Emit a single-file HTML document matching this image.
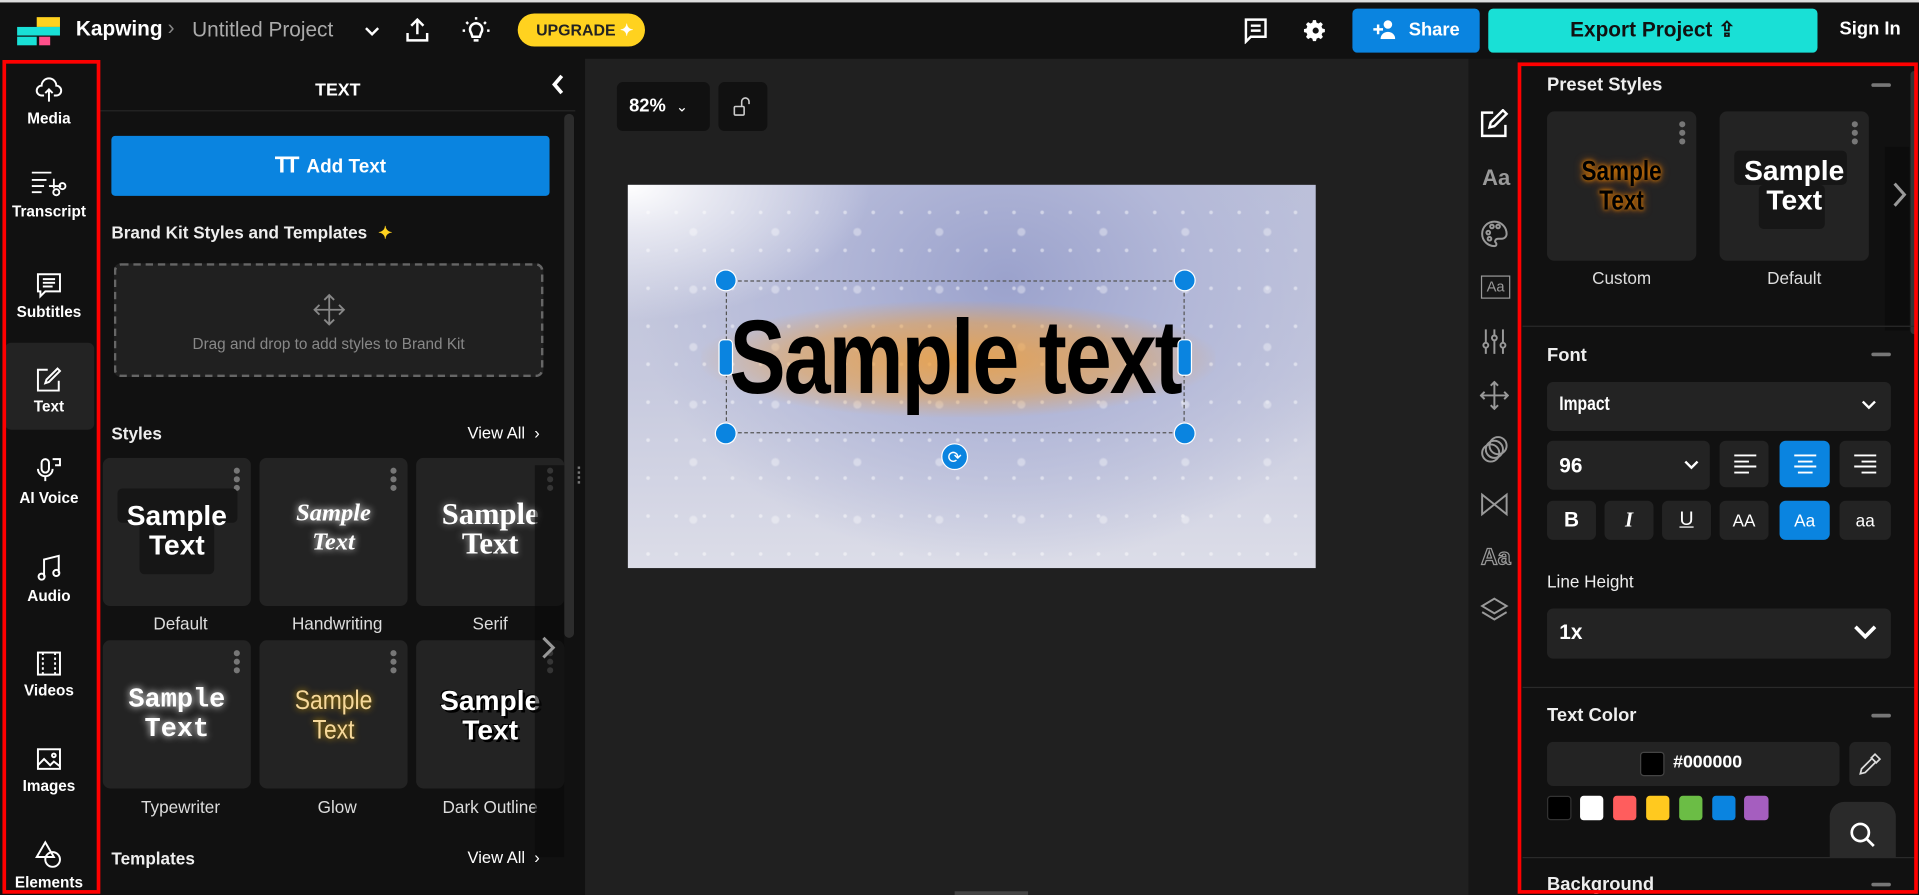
<!DOCTYPE html>
<html><head><meta charset="utf-8">
<style>
*{box-sizing:border-box;margin:0;padding:0}
html,body{width:1919px;height:895px;overflow:hidden;background:#111;font-family:"Liberation Sans",sans-serif;color:#fff}
#s{position:absolute;left:0;top:0;width:1568px;height:731px;transform:scale(1.2239,1.2243);transform-origin:0 0;background:#111;overflow:hidden}
.a{position:absolute}
.nav{position:absolute;left:0;width:80px;text-align:center;font-size:12.5px;font-weight:bold}
.nav svg{display:block;margin:0 auto 4px}
.card{position:absolute;width:121px;height:121px;background:#232323;border-radius:6px}
.dots{position:absolute;right:9px;top:8px;width:5px}
.dots i{display:block;width:5px;height:5px;border-radius:50%;background:#777;margin-bottom:2px}
.lbl{position:absolute;width:121px;text-align:center;font-size:14px;color:#ddd}
.st{position:absolute;left:0;width:121px;text-align:center;line-height:24px;font-size:23px;font-weight:bold;color:#fff}
.btn{position:absolute;background:#232323;border-radius:5px}
.ri{position:absolute;left:1209px;width:24px;height:24px}
.h{font-weight:bold;font-size:15px;color:#eee}
.minus{position:absolute;width:16px;height:3px;background:#777;border-radius:2px}
</style></head><body>
<div id="s">
<div class="a" style="left:0;top:0;width:1568px;height:2px;background:#ddd"></div>
<!-- top bar -->
<div class="a" style="top:14px;height:8px;background:#ffd21f;left:30px;width:19px"></div>
<div class="a" style="left:14px;top:22px;width:35px;height:7px;background:#19e0d6"></div>
<div class="a" style="left:14px;top:30px;width:16px;height:7px;background:#19e0d6"></div>
<div class="a" style="left:32px;top:30px;width:9px;height:7px;background:#ff4f8b"></div>
<div class="a" style="left:62px;top:14px;font-size:17px;font-weight:bold">Kapwing</div>
<div class="a" style="left:137px;top:13px;font-size:17px;color:#888">›</div>
<div class="a" style="left:157px;top:15px;font-size:17px;color:#aaa">Untitled Project</div>
<svg class="a" style="left:297px;top:18px" width="14" height="14" viewBox="0 0 14 14"><path d="M2 5l5 5 5-5" stroke="#fff" stroke-width="2" fill="none"/></svg>
<svg class="a" style="left:330px;top:13px" width="22" height="22" viewBox="0 0 22 22" fill="none" stroke="#fff" stroke-width="2"><path d="M11 15V3M6 8l5-5 5 5M3 14v6h16v-6"/></svg>
<svg class="a" style="left:377px;top:13px" width="24" height="24" viewBox="0 0 24 24" fill="none" stroke="#fff" stroke-width="2"><path d="M8 14a5 5 0 1 1 8 0l-1 3h-6z M10 20h4M12 1v2M4 5l1.5 1.5M20 5l-1.5 1.5M1 12h2M21 12h2"/></svg>
<div class="a" style="left:423px;top:11px;width:104px;height:27px;background:#ffd21f;border-radius:14px;color:#222;font-size:13px;font-weight:bold;line-height:27px;padding-left:15px">UPGRADE <span style="color:#fff">✦</span></div>
<svg class="a" style="left:1016px;top:14px" width="20" height="22" viewBox="0 0 20 22" fill="none" stroke="#fff" stroke-width="2"><path d="M2 2h16v14H6l-4 4z"/><path d="M6 7h8M6 11h8" /></svg>
<svg class="a" style="left:1065px;top:15px" width="20" height="20" viewBox="0 0 24 24"><path fill="#fff" d="M12 8a4 4 0 1 0 0 8 4 4 0 0 0 0-8zm9 5.5v-3l-2.5-.6-.8-1.9 1.3-2.2-2.1-2.1-2.2 1.3-1.9-.8L12.3 1.7h-3l-.6 2.5-1.9.8L4.6 3.7 2.5 5.8l1.3 2.2-.8 1.9L.5 10.5v3l2.5.6.8 1.9-1.3 2.2 2.1 2.1 2.2-1.3 1.9.8.6 2.5h3l.6-2.5 1.9-.8 2.2 1.3 2.1-2.1-1.3-2.2.8-1.9z"/><circle cx="12" cy="12" r="3" fill="#111"/></svg>
<div class="a" style="left:1105px;top:7px;width:104px;height:36px;background:#0a84e0;border-radius:4px;font-size:15px;font-weight:bold;line-height:36px;padding-left:46px">Share</div>
<svg class="a" style="left:1122px;top:16px" width="18" height="16" viewBox="0 0 18 16" fill="#fff"><path d="M0 7h3V4h2v3h3v2H5v3H3V9H0z"/><circle cx="12" cy="4" r="3.5"/><path d="M6 16c0-4 3-6 6-6s6 2 6 6z"/></svg>
<div class="a" style="left:1216px;top:7px;width:269px;height:36px;background:#19e0d6;border-radius:4px;color:#111;font-size:17px;font-weight:bold;line-height:36px;text-align:center">Export Project ⇪</div>
<div class="a" style="left:1503px;top:15px;font-size:15px;font-weight:bold">Sign In</div>

<!-- left nav -->
<div class="a" style="left:2px;top:49px;width:80px;height:681px;border:3px solid #f00;z-index:5"></div>
<div class="a" style="left:4px;top:280px;width:73px;height:71px;background:#232323;border-radius:5px"></div>
<div class="nav" style="top:62px"><svg width="22" height="24" viewBox="0 0 22 24" fill="none" stroke="#fff" stroke-width="1.6"><path d="M7 16H5a4 4 0 0 1 0-8 6 6 0 0 1 12 0 4 4 0 0 1 0 8h-2M11 21V11M8 14l3-3 3 3"/></svg>Media</div>
<div class="nav" style="top:138px"><svg width="32" height="24" viewBox="0 0 32 24" fill="none" stroke="#fff" stroke-width="1.5"><path d="M2 3h16M2 9h12M2 14h10M2 19h8M20 8v8M16 14h10"/><circle cx="27" cy="14" r="2.5"/><circle cx="22" cy="19" r="2.5"/></svg>Transcript</div>
<div class="nav" style="top:222px"><svg width="22" height="22" viewBox="0 0 22 22" fill="none" stroke="#fff" stroke-width="1.6"><path d="M2 2h18v14H8l-4 4v-4H2z M6 6h10M6 9h10M6 12h8"/></svg>Subtitles</div>
<div class="nav" style="top:299px"><svg width="22" height="22" viewBox="0 0 22 22" fill="none" stroke="#fff" stroke-width="1.6"><path d="M10 3H2v17h17v-8M18 2l2 2-9 9-3 1 1-3z"/></svg>Text</div>
<div class="nav" style="top:372px"><svg width="22" height="24" viewBox="0 0 22 24" fill="none" stroke="#fff" stroke-width="1.6"><rect x="5" y="3" width="6" height="11" rx="3"/><path d="M2 11a6 6 0 0 0 12 0M8 17v4M14 3h6v5h-4"/></svg>AI Voice</div>
<div class="nav" style="top:452px"><svg width="22" height="24" viewBox="0 0 22 24" fill="none" stroke="#fff" stroke-width="1.6"><path d="M7 19V5l12-3v14"/><circle cx="5" cy="19" r="2.5"/><circle cx="17" cy="16" r="2.5"/></svg>Audio</div>
<div class="nav" style="top:531px"><svg width="22" height="22" viewBox="0 0 22 22" fill="none" stroke="#fff" stroke-width="1.6"><rect x="2" y="2" width="18" height="18"/><path d="M6 2v18M16 2v18" stroke-dasharray="2 2"/></svg>Videos</div>
<div class="nav" style="top:609px"><svg width="22" height="22" viewBox="0 0 22 22" fill="none" stroke="#fff" stroke-width="1.6"><rect x="2" y="3" width="18" height="16"/><path d="M2 16l5-5 5 5 3-3 5 4"/><circle cx="15" cy="8" r="1.5"/></svg>Images</div>
<div class="nav" style="top:686px"><svg width="24" height="24" viewBox="0 0 24 24" fill="none" stroke="#fff" stroke-width="1.6"><path d="M9 2L2 14h14z"/><circle cx="15" cy="16" r="6"/></svg>Elements</div>

<!-- text panel -->
<div class="a" style="left:82px;top:48px;width:396px;height:683px;background:#111"></div>
<div class="a" style="left:82px;top:66px;width:388px;text-align:center;font-size:14.5px;font-weight:bold">TEXT</div>
<svg class="a" style="left:449px;top:60px" width="14" height="18" viewBox="0 0 14 18"><path d="M10 2L4 9l6 7" stroke="#fff" stroke-width="3" fill="none"/></svg>
<div class="a" style="left:82px;top:90px;width:388px;height:1px;background:#262626"></div>
<div class="a" style="left:461px;top:93px;width:8px;height:428px;background:#2c2c2c;border-radius:4px"></div>
<div class="a" style="left:91px;top:111px;width:358px;height:49px;background:#0a84e0;border-radius:3px;text-align:center;line-height:49px;font-size:15.5px;font-weight:bold"><span style="font-size:19px;letter-spacing:-3px">TT</span>&nbsp;&nbsp;Add Text</div>
<div class="a h" style="left:91px;top:182px;font-size:14px">Brand Kit Styles and Templates <span style="color:#ffd21f;margin-left:5px">✦</span></div>
<div class="a" style="left:93px;top:215px;width:351px;height:93px;border:2px dashed #666;border-radius:6px;background:#202020;text-align:center;color:#888;font-size:12.5px;padding-top:22px">
<svg width="28" height="28" viewBox="0 0 28 28" fill="none" stroke="#888" stroke-width="1.5"><path d="M14 2v24M2 14h24M10 6l4-4 4 4M10 22l4 4 4-4M6 10l-4 4 4 4M22 10l4 4-4 4"/></svg>
<div style="margin-top:4px">Drag and drop to add styles to Brand Kit</div></div>
<div class="a h" style="left:91px;top:346px;font-size:14px">Styles</div>
<div class="a" style="left:382px;top:346px;font-size:13.5px">View All &nbsp;›</div>

<div class="card" style="left:84px;top:374px"><div class="dots"><i></i><i></i><i></i></div>
<div class="a" style="left:12px;top:25px;width:98px;height:28px;background:#161616;border-radius:4px"></div><div class="a" style="left:30px;top:53px;width:61px;height:42px;background:#161616;border-radius:4px"></div>
<div class="st" style="top:35px">Sample<br>Text</div></div>
<div class="card" style="left:212px;top:374px"><div class="dots"><i></i><i></i><i></i></div><div class="st" style="top:33px;font-family:'Liberation Serif',serif;font-style:italic;font-size:20px;text-shadow:0 0 6px #fff">Sample<br>Text</div></div>
<div class="card" style="left:340px;top:374px;width:121px"><div class="dots"><i></i><i></i><i></i></div><div class="st" style="top:35px;font-family:'Liberation Serif',serif;font-size:25px;text-shadow:0 0 6px #aaa">Sample<br>Text</div></div>
<div class="lbl" style="left:87px;top:501px">Default</div><div class="lbl" style="left:215px;top:501px">Handwriting</div><div class="lbl" style="left:340px;top:501px">Serif</div>
<div class="card" style="left:84px;top:523px"><div class="dots"><i></i><i></i><i></i></div><div class="st" style="top:37px;font-family:'Liberation Mono',monospace;font-size:22px;text-shadow:0 0 6px #fff">Sample<br>Text</div></div>
<div class="card" style="left:212px;top:523px"><div class="dots"><i></i><i></i><i></i></div><div class="st" style="top:37px;font-weight:normal;color:#f6d89a;font-size:22px;transform:scaleX(.85);text-shadow:0 0 6px #c90">Sample<br>Text</div></div>
<div class="card" style="left:340px;top:523px"><div class="dots"><i></i><i></i><i></i></div><div class="st" style="top:37px;text-shadow:2px 2px 0 #000,-1px -1px 0 #000">Sample<br>Text</div></div>
<div class="lbl" style="left:87px;top:651px">Typewriter</div><div class="lbl" style="left:215px;top:651px">Glow</div><div class="lbl" style="left:340px;top:651px">Dark Outline</div>
<div class="a" style="left:437px;top:380px;width:24px;height:320px;background:rgba(10,10,10,.6)"></div>
<svg class="a" style="left:441px;top:519px" width="14" height="20" viewBox="0 0 14 20"><path d="M3 2l8 8-8 8" stroke="#999" stroke-width="2.5" fill="none"/></svg>
<div class="a h" style="left:91px;top:693px;font-size:14px">Templates</div>
<div class="a" style="left:382px;top:693px;font-size:13.5px">View All &nbsp;›</div>

<!-- center -->
<div class="a" style="left:478px;top:48px;width:722px;height:683px;background:#202020"></div>
<div class="a" style="left:472px;top:381px;width:3px;height:14px;border-left:2px dotted #777"></div>
<div class="a" style="left:504px;top:67px;width:76px;height:40px;background:#111;border-radius:5px;font-size:15px;font-weight:bold;line-height:40px;padding-left:10px">82% <span style="font-weight:normal;font-size:12px;margin-left:4px">⌄</span></div>
<div class="a" style="left:587px;top:67px;width:40px;height:40px;background:#111;border-radius:5px"></div>
<svg class="a" style="left:598px;top:78px" width="18" height="18" viewBox="0 0 18 18" fill="none" stroke="#ccc" stroke-width="1.3"><rect x="2" y="9" width="8" height="7" rx="1"/><path d="M8 9V5a3 3 0 0 1 6 0v2"/></svg>
<div class="a" style="left:513px;top:151px;width:562px;height:313px;overflow:hidden;background:radial-gradient(ellipse at 0% 0%,#fff 0,#e8e9f2 8%,rgba(0,0,0,0) 25%),radial-gradient(ellipse at 55% 25%,#9ba2cc 0,#b3b8d8 35%,rgba(0,0,0,0) 70%),linear-gradient(180deg,#bfc3da 0%,#c6c9de 50%,#dcdde8 100%)">
<div class="a" style="left:0;top:0;width:562px;height:313px;opacity:.6;background-image:radial-gradient(circle,rgba(255,255,255,.8) 1px,transparent 2px),radial-gradient(circle,rgba(255,255,255,.6) 2.5px,transparent 4px);background-size:23px 31px,67px 47px;background-position:5px 7px,20px 15px"></div>
<div class="a" style="left:60px;top:95px;width:420px;height:95px;background:radial-gradient(ellipse,rgba(240,160,60,.85) 0,rgba(240,160,60,.5) 45%,rgba(240,160,60,0) 72%)"></div>
<div class="a" style="left:-33px;top:96px;width:600px;text-align:center;white-space:nowrap"><span style="display:inline-block;font-weight:bold;font-size:86px;line-height:90px;color:#000;transform:scaleX(.8);letter-spacing:-2px">Sample text</span></div>
<div class="a" style="left:80px;top:78px;width:375px;height:125px;border:1px dashed #555"></div>
<div class="a" style="left:71px;top:69px;width:18px;height:18px;border-radius:50%;background:#0a84e0;border:1px solid #fff"></div>
<div class="a" style="left:446px;top:69px;width:18px;height:18px;border-radius:50%;background:#0a84e0;border:1px solid #fff"></div>
<div class="a" style="left:71px;top:194px;width:18px;height:18px;border-radius:50%;background:#0a84e0;border:1px solid #fff"></div>
<div class="a" style="left:446px;top:194px;width:18px;height:18px;border-radius:50%;background:#0a84e0;border:1px solid #fff"></div>
<div class="a" style="left:74px;top:126px;width:12px;height:30px;border-radius:4px;background:#0a84e0;border:1px solid #fff"></div>
<div class="a" style="left:449px;top:126px;width:12px;height:30px;border-radius:4px;background:#0a84e0;border:1px solid #fff"></div>
<div class="a" style="left:256px;top:211px;width:22px;height:22px;border-radius:50%;background:#0a84e0;border:1px solid #fff;color:#fff;font-size:14px;text-align:center;line-height:20px">⟳</div>
</div>

<!-- right icon column -->
<div class="a" style="left:1200px;top:48px;width:40px;height:683px;background:#161616"></div>
<svg class="ri" style="top:89px" viewBox="0 0 24 24" fill="none" stroke="#fff" stroke-width="2"><path d="M11 3H2v19h19v-9M19 1l3 3-10 10-4 1 1-4z"/></svg>
<div class="a" style="left:1211px;top:135px;font-size:18px;font-weight:bold;color:#999">Aa</div>
<svg class="ri" style="top:179px" viewBox="0 0 24 24" fill="none" stroke="#999" stroke-width="1.6"><path d="M12 2a10 10 0 0 0 0 20c2 0 2-2 1-3s0-3 2-3h3a4 4 0 0 0 4-4c0-5-4-10-10-10z"/><circle cx="7" cy="11" r="1.5"/><circle cx="10" cy="6" r="1.5"/><circle cx="15" cy="6" r="1.5"/><circle cx="8" cy="16" r="1.5"/></svg>
<div class="a" style="left:1210px;top:225px;width:24px;height:19px;border:1.5px solid #999;font-size:12px;color:#999;text-align:center;line-height:16px">Aa</div>
<svg class="ri" style="top:267px" viewBox="0 0 24 24" fill="none" stroke="#999" stroke-width="1.6"><path d="M5 2v20M12 2v20M19 2v20"/><circle cx="5" cy="15" r="2" fill="#161616"/><circle cx="12" cy="9" r="2" fill="#161616"/><circle cx="19" cy="15" r="2" fill="#161616"/></svg>
<svg class="ri" style="top:311px" viewBox="0 0 24 24" fill="none" stroke="#999" stroke-width="1.6"><path d="M12 1v22M1 12h22M9 4l3-3 3 3M9 20l3 3 3-3M4 9l-3 3 3 3M20 9l3 3-3 3"/></svg>
<svg class="ri" style="top:355px" viewBox="0 0 24 24" fill="none" stroke="#999" stroke-width="1.6"><circle cx="9" cy="15" r="7"/><circle cx="12" cy="12" r="7"/><circle cx="15" cy="9" r="7"/></svg>
<svg class="ri" style="top:400px" viewBox="0 0 24 24" fill="none" stroke="#999" stroke-width="1.6"><path d="M2 4v16l20-16v16z"/></svg>
<div class="a" style="left:1210px;top:445px;font-size:19px;color:#161616;-webkit-text-stroke:1px #999;font-weight:bold">Aa</div>
<svg class="ri" style="top:486px" viewBox="0 0 24 24" fill="none" stroke="#999" stroke-width="1.6"><path d="M12 3l10 6-10 6-10-6z M2 14l10 6 10-6"/></svg>

<!-- right panel -->
<div class="a" style="left:1240px;top:48px;width:328px;height:683px;background:#111"></div>
<div class="a" style="left:1240px;top:51px;width:327px;height:679px;border:3px solid #f00;z-index:5"></div>
<div class="a" style="left:1561px;top:58px;width:6px;height:215px;background:#333;border-radius:3px"></div>
<div class="a h" style="left:1264px;top:61px">Preset Styles</div><div class="minus" style="left:1529px;top:68px"></div>
<div class="card" style="left:1264px;top:91px;width:122px;height:122px"><div class="dots"><i></i><i></i><i></i></div><div class="st" style="width:122px;top:36px;color:#000;text-shadow:0 0 4px #e80,0 0 8px #c60"><span style="display:inline-block;transform:scaleX(.8)">Sample<br>Text</span></div></div>
<div class="card" style="left:1405px;top:91px;width:122px;height:122px"><div class="dots"><i></i><i></i><i></i></div><div class="a" style="left:12px;top:32px;width:92px;height:28px;background:#161616;border-radius:4px"></div><div class="a" style="left:32px;top:60px;width:54px;height:36px;background:#161616;border-radius:4px"></div><div class="st" style="width:122px;top:36px">Sample<br>Text</div></div>
<div class="a" style="left:1540px;top:120px;width:20px;height:150px;background:#0c0c0c"></div>
<svg class="a" style="left:1545px;top:148px" width="14" height="22" viewBox="0 0 14 22"><path d="M3 2l8 9-8 9" stroke="#999" stroke-width="2.5" fill="none"/></svg>
<div class="lbl" style="left:1264px;top:219px;width:122px">Custom</div><div class="lbl" style="left:1405px;top:219px;width:122px">Default</div>
<div class="a" style="left:1244px;top:266px;width:320px;height:1px;background:#2a2a2a"></div>
<div class="a h" style="left:1264px;top:282px">Font</div><div class="minus" style="left:1529px;top:288px"></div>
<div class="btn" style="left:1264px;top:312px;width:281px;height:40px"></div>
<div class="a" style="left:1274px;top:322px;font-weight:bold;font-size:16px;transform:scaleX(.8);transform-origin:0 0">Impact</div>
<svg class="a" style="left:1520px;top:325px" width="14" height="12" viewBox="0 0 14 12"><path d="M2 3l5 5 5-5" stroke="#fff" stroke-width="2" fill="none"/></svg>
<div class="btn" style="left:1264px;top:360px;width:133px;height:40px"></div>
<div class="a" style="left:1274px;top:371px;font-size:17px;font-weight:bold">96</div>
<svg class="a" style="left:1375px;top:374px" width="14" height="12" viewBox="0 0 14 12"><path d="M2 3l5 5 5-5" stroke="#fff" stroke-width="2" fill="none"/></svg>
<div class="btn" style="left:1405px;top:360px;width:40px;height:38px"></div>
<div class="btn" style="left:1454px;top:360px;width:41px;height:38px;background:#0a84e0"></div>
<div class="btn" style="left:1503px;top:360px;width:42px;height:38px"></div>
<svg class="a" style="left:1416px;top:370px" width="20" height="18" viewBox="0 0 20 18" stroke="#fff" stroke-width="1.6"><path d="M1 2h18M1 7h12M1 11h18M1 16h12"/></svg>
<svg class="a" style="left:1465px;top:370px" width="20" height="18" viewBox="0 0 20 18" stroke="#fff" stroke-width="1.6"><path d="M1 2h18M4 7h12M1 11h18M4 16h12"/></svg>
<svg class="a" style="left:1514px;top:370px" width="20" height="18" viewBox="0 0 20 18" stroke="#fff" stroke-width="1.6"><path d="M1 2h18M7 7h12M1 11h18M7 16h12"/></svg>
<div class="btn" style="left:1264px;top:409px;width:40px;height:32px;text-align:center;line-height:32px;font-weight:bold;font-size:17px">B</div>
<div class="btn" style="left:1311px;top:409px;width:40px;height:32px;text-align:center;line-height:32px;font-weight:bold;font-style:italic;font-size:17px;font-family:'Liberation Serif',serif">I</div>
<div class="btn" style="left:1358px;top:409px;width:40px;height:32px;text-align:center;line-height:32px;font-size:16px;text-decoration:underline">U</div>
<div class="btn" style="left:1405px;top:409px;width:40px;height:32px;text-align:center;line-height:32px;font-size:14px">AA</div>
<div class="btn" style="left:1454px;top:409px;width:41px;height:32px;text-align:center;line-height:32px;font-size:14px;background:#0a84e0">Aa</div>
<div class="btn" style="left:1503px;top:409px;width:42px;height:32px;text-align:center;line-height:32px;font-size:14px">aa</div>
<div class="a" style="left:1264px;top:467px;font-size:14px;color:#eee">Line Height</div>
<div class="btn" style="left:1264px;top:497px;width:281px;height:41px"></div>
<div class="a" style="left:1274px;top:507px;font-size:17px;font-weight:bold">1x</div>
<svg class="a" style="left:1513px;top:508px" width="22" height="16" viewBox="0 0 22 16"><path d="M3 4l8 8 8-8" stroke="#fff" stroke-width="3" fill="none"/></svg>
<div class="a" style="left:1244px;top:561px;width:320px;height:1px;background:#2a2a2a"></div>
<div class="a h" style="left:1264px;top:576px">Text Color</div><div class="minus" style="left:1529px;top:583px"></div>
<div class="btn" style="left:1264px;top:606px;width:239px;height:36px"></div>
<div class="a" style="left:1340px;top:614px;width:20px;height:20px;background:#000;border:1px solid #444;border-radius:3px"></div>
<div class="a" style="left:1367px;top:615px;font-size:14.5px;font-weight:bold">#000000</div>
<div class="btn" style="left:1511px;top:606px;width:34px;height:36px"></div>
<svg class="a" style="left:1518px;top:614px" width="20" height="20" viewBox="0 0 20 20" fill="none" stroke="#ddd" stroke-width="1.4"><path d="M14 2l4 4-3 3-4-4zM11 6L3 14l-1 4 4-1 8-8"/></svg>
<div class="a" style="left:1264px;top:650px;width:20px;height:20px;background:#000;border:1px solid #333;border-radius:3px"></div>
<div class="a" style="left:1291px;top:650px;width:19px;height:20px;background:#fff;border-radius:3px"></div>
<div class="a" style="left:1318px;top:650px;width:19px;height:20px;background:#ff5d5d;border-radius:3px"></div>
<div class="a" style="left:1345px;top:650px;width:19px;height:20px;background:#ffc91f;border-radius:3px"></div>
<div class="a" style="left:1372px;top:650px;width:19px;height:20px;background:#6bbd45;border-radius:3px"></div>
<div class="a" style="left:1399px;top:650px;width:19px;height:20px;background:#0a84e0;border-radius:3px"></div>
<div class="a" style="left:1425px;top:650px;width:20px;height:20px;background:#a55ebf;border-radius:3px"></div>
<div class="a" style="left:1495px;top:655px;width:54px;height:45px;background:#2a2a2a;border-radius:12px 12px 0 0"></div>
<svg class="a" style="left:1510px;top:670px" width="24" height="24" viewBox="0 0 24 24" fill="none" stroke="#fff" stroke-width="2.2"><circle cx="10" cy="10" r="7"/><path d="M15 15l6 6"/></svg>
<div class="a" style="left:1244px;top:700px;width:320px;height:1px;background:#2a2a2a"></div>
<div class="a h" style="left:1264px;top:714px">Background</div><div class="minus" style="left:1529px;top:721px"></div>
<div class="a" style="left:780px;top:728px;width:60px;height:3px;background:#444"></div>
</div>
</body></html>
